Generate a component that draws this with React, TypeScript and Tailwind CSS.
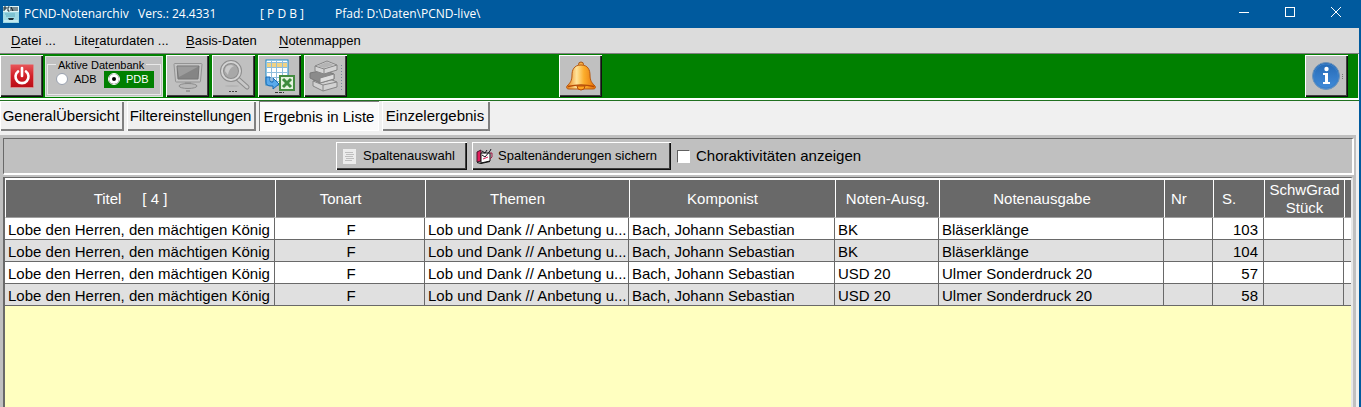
import { useState, type ReactNode } from 'react';
import clsx from 'clsx';

const menus = [
  { before: '', key: 'D', after: 'atei ...', width: 'w-[63px]' },
  { before: 'Lite', key: 'r', after: 'aturdaten ...', width: 'w-28' },
  { before: '', key: 'B', after: 'asis-Daten', width: 'w-[93px]' },
  { before: '', key: 'N', after: 'otenmappen', width: 'w-28' },
];

const tabs = [
  { label: 'GeneralÜbersicht', width: 'w-[124px]' },
  { label: 'Filtereinstellungen', width: 'w-[129px]' },
  { label: 'Ergebnis in Liste', width: 'w-[120px]' },
  { label: 'Einzelergebnis', width: 'w-[108px]' },
];

const columns = [
  { label: 'Titel     [ 4 ]', width: 'w-[270px]', align: 'text-center pr-5' },
  { label: 'Tonart', width: 'w-[150px]', align: 'text-center pr-5' },
  { label: 'Themen', width: 'w-[204px]', align: 'text-center pr-5' },
  { label: 'Komponist', width: 'w-[206px]', align: 'text-center pr-5' },
  { label: 'Noten-Ausg.', width: 'w-[104px]', align: 'text-center' },
  { label: 'Notenausgabe', width: 'w-[225px]', align: 'text-center pr-5' },
  { label: 'Nr', width: 'w-[49px]', align: 'text-left pl-1.5' },
  { label: 'S.', width: 'w-[51px]', align: 'text-left pl-2' },
  { label: 'SchwGrad Stück', width: 'w-20', align: 'text-center' },
  { label: '', width: '', align: '' },
];

const rows = [
  { id: 1, code: 'BK', edition: 'Bläserklänge', page: 103 },
  { id: 2, code: 'BK', edition: 'Bläserklänge', page: 104 },
  { id: 3, code: 'USD 20', edition: 'Ulmer Sonderdruck 20', page: 57 },
  { id: 4, code: 'USD 20', edition: 'Ulmer Sonderdruck 20', page: 58 },
];

const raised =
  'bg-[#c0c0c0] shadow-[inset_1px_1px_#fff,inset_-1px_-1px_#101010,inset_-2px_-2px_#404040]';

function ToolButton({ label, children }: { label: string; children: ReactNode }) {
  return (
    <button
      aria-label={label}
      className={clsx(raised, 'flex h-[42px] w-[43px] shrink-0 items-center justify-center')}
    >
      {children}
    </button>
  );
}

function AppIcon() {
  return (
    <svg width="16" height="17" viewBox="0 0 16 17">
      <rect width="16" height="17" fill="#9fd9e4" />
      <rect width="16" height="6" fill="#dff5f7" />
      <path d="M1 1v4M1 1h2v2H1M6.500 1H5v4h1.500M8 5V1l2 4V1M12 5V1M14 5V1" fill="none" stroke="#10222c" />
      <path d="M2 8h10M3 10h9" stroke="#5babc0" />
      <path d="M5 12h6l-1 2H6z" fill="#1a2c35" />
      <path d="M1 15h14" stroke="#e8fafa" />
    </svg>
  );
}

function PowerIcon() {
  return (
    <svg width="24" height="24" viewBox="0 0 24 24">
      <defs>
        <linearGradient id="power" x2="0" y2="1">
          <stop stopColor="#e8575a" />
          <stop offset="0.5" stopColor="#d21f27" />
          <stop offset="1" stopColor="#b90d16" />
        </linearGradient>
      </defs>
      <rect x="0.500" y="0.500" width="23" height="23" rx="1" fill="url(#power)" stroke="#d98c8c" />
      <path d="M8 7.500a6.500 6.500 0 1 0 8 0" fill="none" stroke="#fff" strokeWidth="2.600" strokeLinecap="round" />
      <path d="M12 4v8" stroke="#fff" strokeWidth="2.600" strokeLinecap="round" />
    </svg>
  );
}

function MonitorIcon() {
  return (
    <svg width="32" height="34" viewBox="0 0 32 34">
      <path d="M3 4.500h26q1 0 1 1L28.500 22q0 1-1 1h-23q-1 0-1-1L2 5.500q0-1 1-1z" fill="#c4c4c4" stroke="#949494" />
      <path d="M5 7h22l-1 13H6z" fill="#858585" stroke="#777" />
      <path d="M5.500 7.500h21L7 18z" fill="#9c9c9c" />
      <path d="M13 23h6l1 3h-8z" fill="#999" />
      <ellipse cx="16" cy="27" rx="9" ry="2.500" fill="#b8b8b8" stroke="#8c8c8c" />
      <path d="M14 32h4" stroke="#777" />
    </svg>
  );
}

function SearchIcon() {
  return (
    <svg width="34" height="34" viewBox="0 0 34 34">
      <path d="M21 20l9 8" stroke="#8c8c8c" strokeWidth="5" strokeLinecap="round" />
      <path d="M21 20l9 8" stroke="#c8c8c8" strokeWidth="3" strokeLinecap="round" />
      <circle cx="14" cy="12" r="9" fill="#a8a8a8" stroke="#8c8c8c" strokeWidth="4" />
      <circle cx="14" cy="12" r="9" fill="none" stroke="#d4d4d4" strokeWidth="2" />
      <path d="M8 12q0-6 6-6l3 1q-5 2-6 9z" fill="#cacaca" />
      <ellipse cx="15" cy="27" rx="7" ry="1" fill="#b4b4b4" />
      <path d="M12 32.500h8" stroke="#444" strokeDasharray="2 1" />
    </svg>
  );
}

function ExcelIcon() {
  return (
    <svg width="34" height="34" viewBox="0 0 34 34">
      <rect x="3" y="1" width="22" height="25" fill="#fff" stroke="#1688c8" />
      <rect x="4" y="3" width="20" height="5" fill="#f0d283" />
      <path d="M4 3.500h20M4 8.500h20M4 13.500h20M4 18.500h20M4 22.500h20M8.500 2v23M13.500 2v23M19.500 2v23" stroke="#8ebddc" />
      <path d="M3 18v5q0 4 5 4h2v3l6-5-6-6v4H8q-1 0-1-2v-3z" fill="#59aaec" stroke="#1669b5" />
      <rect x="17" y="17" width="14" height="14" fill="#e4f3df" stroke="#458c42" strokeWidth="2" />
      <path d="M20 20l8 8M28 20l-8 8" stroke="#3d8c3d" strokeWidth="3" />
      <path d="M12 33.500h9" stroke="#333" strokeDasharray="3 1" />
    </svg>
  );
}

function BooksIcon() {
  return (
    <svg width="35" height="34" viewBox="0 0 35 34" strokeLinejoin="round">
      <path d="M5 22l14-3 10 4v5l-14 4-10-5z" fill="#d2d2d2" stroke="#868686" />
      <path d="M5 22l10 4 14-3M15 26v6" fill="none" stroke="#868686" />
      <path d="M2 14l14-3 10 4v5l-14 4-10-5z" fill="#8b8b8b" stroke="#787878" />
      <path d="M12 19l14-4v5l-14 4z" fill="#ddd" stroke="#868686" />
      <path d="M7 7l12-5 10 4v5l-13 4-9-3z" fill="#d4d4d4" stroke="#868686" />
      <path d="M7 7l9 3 13-4M16 10v5" fill="none" stroke="#868686" />
      <path d="M9 7l10-4 7 3-10 3z" fill="#b4b4b4" />
      <path d="M33.500 6v25" stroke="#77839a" strokeDasharray="1 2" />
    </svg>
  );
}

function BellIcon() {
  return (
    <svg width="32" height="32" viewBox="0 0 32 32">
      <defs>
        <linearGradient id="bell">
          <stop stopColor="#e97d10" />
          <stop offset="0.350" stopColor="#ffe39a" />
          <stop offset="0.600" stopColor="#fcae2c" />
          <stop offset="1" stopColor="#e56e08" />
        </linearGradient>
      </defs>
      <circle cx="16" cy="4.500" r="2.500" fill="#f7ae46" stroke="#a85514" />
      <path
        d="M16 5c7 0 9 5 9 10 0 6 2 8 5 11 1 2 0 3-2 3H4c-2 0-3-1-2-3 3-3 5-5 5-11 0-5 2-10 9-10z"
        fill="url(#bell)"
        stroke="#b65a12"
      />
      <path d="M3 26.500q13-3 26 0" fill="none" stroke="#b64c08" strokeWidth="1.500" />
      <path d="M12 26h8q0 4-4 4t-4-4z" fill="#ffa51f" stroke="#b64c08" />
    </svg>
  );
}

function InfoIcon() {
  return (
    <svg width="34" height="32" viewBox="0 0 34 32">
      <defs>
        <linearGradient id="info" x2="0" y2="1">
          <stop stopColor="#2468b4" />
          <stop offset="1" stopColor="#438ddb" />
        </linearGradient>
      </defs>
      <circle cx="16" cy="16" r="13.500" fill="url(#info)" stroke="#6d93b9" />
      <circle cx="16" cy="16" r="12" fill="none" stroke="#3b80c8" />
      <circle cx="16.500" cy="9" r="2.200" fill="#fff" />
      <path d="M13 13h5v9h2v2h-7v-2h2v-7h-2z" fill="#fff" />
      <path d="M32.500 14v5" stroke="#777" strokeDasharray="1 1" />
    </svg>
  );
}

function ListIcon() {
  return (
    <svg width="13" height="15" viewBox="0 0 13 15">
      <rect width="13" height="15" fill="#ececec" />
      <path d="M2 3.500h8M3 5.500h8M2 7.500h8M3 9.500h8M2 11.500h7" stroke="#bebebe" />
    </svg>
  );
}

function SaveIcon() {
  return (
    <svg width="17" height="16" viewBox="0 0 17 16">
      <path d="M1 4l4-2v11l-4 1z" fill="#e21e5b" stroke="#45142a" />
      <path d="M5 5h9v8l-9 2z" fill="#fff" stroke="#111" />
      <path d="M6 7l3 2 5-6 1-2M6 3l3 2 2-3" fill="none" stroke="#16121b" />
      <path d="M7 11l5-2" stroke="#e21e5b" />
      <path d="M14 5h2v4l-2 2" fill="none" stroke="#a31845" />
      <path d="M1 14.500l4 1 9-2" fill="none" stroke="#111" />
    </svg>
  );
}

function TitleBar() {
  return (
    <header className="flex h-7 items-center bg-[#005a9e] pl-[3px] font-['Open_Sans',sans-serif] text-xs text-white">
      <AppIcon />
      <h1 className="flex whitespace-pre pb-px pl-[5px]">
        <span className="w-[114px]">PCND-Notenarchiv</span>
        <span className="w-[122px]">Vers.: 24.4331</span>
        <span className="w-[75px]">[ P D B ]</span>
        <span>Pfad: D:\Daten\PCND-live\</span>
      </h1>
      <div className="ml-auto flex h-full items-center pb-1">
        <button aria-label="Minimieren" className="flex w-[46px] justify-center">
          <svg width="10" height="10" viewBox="0 0 10 10" stroke="#fff">
            <path d="M0 5.500h10" />
          </svg>
        </button>
        <button aria-label="Maximieren" className="flex w-[46px] justify-center">
          <svg width="10" height="10" viewBox="0 0 10 10" stroke="#fff" fill="none">
            <rect x="0.500" y="0.500" width="9" height="9" />
          </svg>
        </button>
        <button aria-label="Schließen" className="flex w-[46px] justify-center">
          <svg width="10" height="10" viewBox="0 0 10 10" stroke="#fff">
            <path d="M0 0l10 10M10 0L0 10" />
          </svg>
        </button>
      </div>
    </header>
  );
}

function DatabaseSwitch() {
  const [database, setDatabase] = useState('PDB');

  return (
    <div className="ml-0.5 mr-[3px] h-[41px] w-[118px] shrink-0 border border-[#d8e8d8] bg-[#c0c0c0] pt-0.5">
      <fieldset className="mx-px h-9 border border-[#e8e8e8] text-[11px] leading-3">
        <legend className="ml-2 px-0.5">Aktive Datenbank</legend>
        <div className="flex pl-1.5">
          {['ADB', 'PDB'].map((name) => (
            <label
              key={name}
              className={clsx(
                'flex h-[17px] w-[50px] items-center gap-1.5',
                database === name ? 'bg-[#008000] pl-1 text-white' : 'pl-0.5',
              )}
            >
              <input
                type="radio"
                name="database"
                checked={database === name}
                onChange={() => setDatabase(name)}
                className="size-3 shrink-0 appearance-none rounded-full border border-gray-400 bg-white checked:border-white checked:bg-black checked:shadow-[inset_0_0_0_3px_#fff]"
              />
              {name}
            </label>
          ))}
        </div>
      </fieldset>
    </div>
  );
}

function ResultTable() {
  return (
    <div className="mr-[3px] flex grow flex-col border-l-2 border-r-2 border-t border-l-[#696969] border-r-[#e8e8e8] border-t-[#696969] bg-[#ffffc0]">
      <table className="w-full table-fixed border-separate border-spacing-0 whitespace-nowrap text-[15px] leading-[18px]">
        <thead>
          <tr className="h-10 bg-[#696969] text-white">
            {columns.map((column) => (
              <th
                key={column.label}
                className={clsx(
                  column.width,
                  column.align,
                  'border-b border-l border-t-2 border-b-[#a0a0a0] border-l-white border-t-white p-0 align-middle font-normal',
                  column.label === 'SchwGrad Stück' ? 'whitespace-normal' : 'whitespace-pre',
                )}
              >
                {column.label}
              </th>
            ))}
          </tr>
        </thead>
        <tbody className="[&_td]:overflow-hidden [&_td]:border-b [&_td]:border-r [&_td]:border-[#696969] [&_td]:pl-[3px] [&_td]:pt-0.5 [&_td:last-child]:border-r-0">
          {rows.map((row) => (
            <tr key={row.id} className="h-[22px] bg-white even:bg-[#e0e0e0]">
              <td>Lobe den Herren, den mächtigen König</td>
              <td className="text-center">F</td>
              <td>Lob und Dank // Anbetung u...</td>
              <td>Bach, Johann Sebastian</td>
              <td>{row.code}</td>
              <td>{row.edition}</td>
              <td />
              <td className="pr-[5px] text-right">{row.page}</td>
              <td />
              <td />
            </tr>
          ))}
        </tbody>
      </table>
    </div>
  );
}

export default function App() {
  const [activeTab, setActiveTab] = useState('Ergebnis in Liste');

  return (
    <div className="flex min-h-screen flex-col border-r-2 border-[#005a9e] bg-[#f0f0f0] font-['Liberation_Sans',Arial,sans-serif] text-black">
      <TitleBar />
      <nav className="flex h-[26px] items-center border-b border-[#808080] bg-[#dcdcdc] pl-[11px] text-[13px]">
        {menus.map((menu) => (
          <button key={menu.key} className={clsx(menu.width, 'shrink-0 text-left')}>
            {menu.before}
            <span className="underline underline-offset-2">{menu.key}</span>
            {menu.after}
          </button>
        ))}
      </nav>

      <div className="mr-px flex h-11 shrink-0 items-center bg-[#008000]">
        <ToolButton label="Beenden">
          <PowerIcon />
        </ToolButton>
        <DatabaseSwitch />
        <div className="flex gap-[3px]">
          <ToolButton label="Bildschirm">
            <MonitorIcon />
          </ToolButton>
          <ToolButton label="Suchen">
            <SearchIcon />
          </ToolButton>
          <ToolButton label="Excel-Export">
            <ExcelIcon />
          </ToolButton>
          <ToolButton label="Bücher">
            <BooksIcon />
          </ToolButton>
        </div>
        <div className="ml-[212px]">
          <ToolButton label="Erinnerungen">
            <BellIcon />
          </ToolButton>
        </div>
        <div className="ml-auto mr-2.5">
          <ToolButton label="Info">
            <InfoIcon />
          </ToolButton>
        </div>
      </div>
      <div className="h-[3px] border-b border-[#207020] bg-white" />

      <div role="tablist" className="flex h-[34px] gap-[3px]">
        {tabs.map((tab) => (
          <button
            key={tab.label}
            role="tab"
            aria-selected={activeTab === tab.label}
            onClick={() => setActiveTab(tab.label)}
            className={clsx(
              tab.width,
              'h-[30px] shrink-0 whitespace-nowrap text-[15px]',
              activeTab === tab.label
                ? 'bg-[#fafafa] pt-0.5 shadow-[inset_1px_1px_#808080,inset_-1px_-1px_#fff]'
                : 'pr-0.5 shadow-[inset_1px_1px_#fff,inset_-2px_-2px_#808080]',
            )}
          >
            {tab.label}
          </button>
        ))}
      </div>

      <main className="mr-[3px] flex grow flex-col bg-[#c0c0c0] pl-[3px] pt-[3px]">
        <div className="mb-0.5 mr-0.5 flex h-[37px] items-center border border-b-2 border-r-2 border-b-white border-l-[#696969] border-r-white border-t-[#696969] pl-[332px] text-[13px]">
          <button className={clsx(raised, 'flex h-7 w-[131px] shrink-0 items-center gap-[7px] pl-[7px]')}>
            <ListIcon />
            Spaltenauswahl
          </button>
          <button
            className={clsx(raised, 'ml-[5px] flex h-7 w-[199px] shrink-0 items-center gap-[5px] whitespace-nowrap pl-1')}
          >
            <SaveIcon />
            Spaltenänderungen sichern
          </button>
          <label className="ml-1.5 flex items-center gap-1.5 text-[15px]">
            <input
              type="checkbox"
              className="size-[13px] appearance-none border border-b-white border-l-[#606060] border-r-white border-t-[#606060] bg-white checked:bg-black"
            />
            Choraktivitäten anzeigen
          </label>
        </div>
        <ResultTable />
      </main>
    </div>
  );
}
